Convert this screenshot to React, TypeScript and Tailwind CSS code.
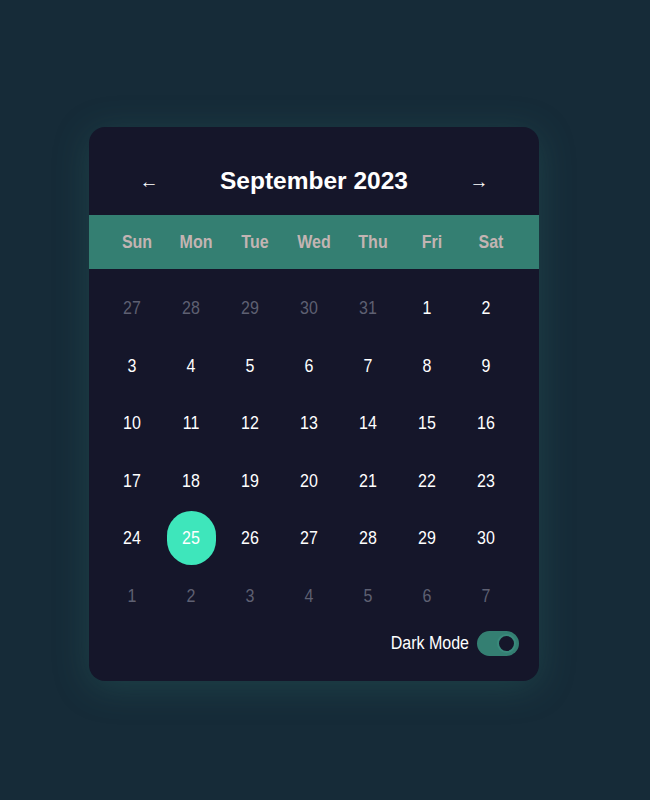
import { useState } from 'react';

const DAYS = ['Sun', 'Mon', 'Tue', 'Wed', 'Thu', 'Fri', 'Sat'];

type Cell = { day: number; muted?: boolean };

const cells: Cell[] = [
  ...[27, 28, 29, 30, 31].map((d) => ({ day: d, muted: true })),
  ...Array.from({ length: 30 }, (_, i) => ({ day: i + 1 })),
  ...[1, 2, 3, 4, 5, 6, 7].map((d) => ({ day: d, muted: true })),
];

export default function App() {
  const [dark, setDark] = useState(true);
  const selected = 25;

  return (
    <div className="min-h-screen w-full bg-[#162b38] pl-[89px] pt-[127px] font-['Liberation_Sans',Arial,sans-serif]">
      <div className="w-[450px] h-[554px] rounded-[16px] bg-[#15162a] shadow-[0_6px_36px_rgba(52,127,114,0.28)] overflow-hidden flex flex-col">
        {/* Month header */}
        <div className="h-[88px] flex items-center justify-between px-[53px] pt-[20px]">
          <button className="text-white text-[19px] w-[14px] leading-none flex justify-center">←</button>
          <h1 className="text-white text-[24.5px] font-bold">September 2023</h1>
          <button className="text-white text-[19px] w-[14px] leading-none flex justify-center">→</button>
        </div>

        {/* Weekday band */}
        <div className="h-[54px] bg-[#347f72] px-[18.5px] grid grid-cols-[repeat(7,59px)] items-center">
          {DAYS.map((d) => (
            <span key={d} className="text-center text-[16px] font-bold text-[#c3b4b3] scale-y-[1.12]">
              {d}
            </span>
          ))}
        </div>

        {/* Dates */}
        <div className="px-[18.5px] pt-[12px] grid grid-cols-[repeat(7,49px)] auto-rows-[54px] gap-x-[10px] gap-y-[3.5px]">
          {cells.map((c, i) => {
            const isSel = !c.muted && c.day === selected;
            return (
              <div
                key={i}
                className={
                  'flex items-center justify-center text-[16px] rounded-full ' +
                  (isSel
                    ? 'bg-[#3ee6bb] text-white'
                    : c.muted
                      ? 'text-[#5e6072]'
                      : 'text-white')
                }
              >
                <span className="scale-y-[1.12]">{c.day}</span>
              </div>
            );
          })}
        </div>

        {/* Dark mode toggle */}
        <div className="flex items-center justify-end gap-[8px] pr-[20px] pt-[8px]">
          <span className="text-white text-[16px] scale-y-[1.1] translate-y-[1px]">Dark Mode</span>
          <button
            onClick={() => setDark(!dark)}
            className={
              'w-[42px] h-[25px] rounded-full flex items-center px-[3px] ' +
              (dark ? 'bg-[#347f72] justify-end' : 'bg-[#5e6072] justify-start')
            }
          >
            <span className="w-[19px] h-[19px] rounded-full bg-[#15162a] border-2 border-[#3a8a7c] block" />
          </button>
        </div>
      </div>
    </div>
  );
}
